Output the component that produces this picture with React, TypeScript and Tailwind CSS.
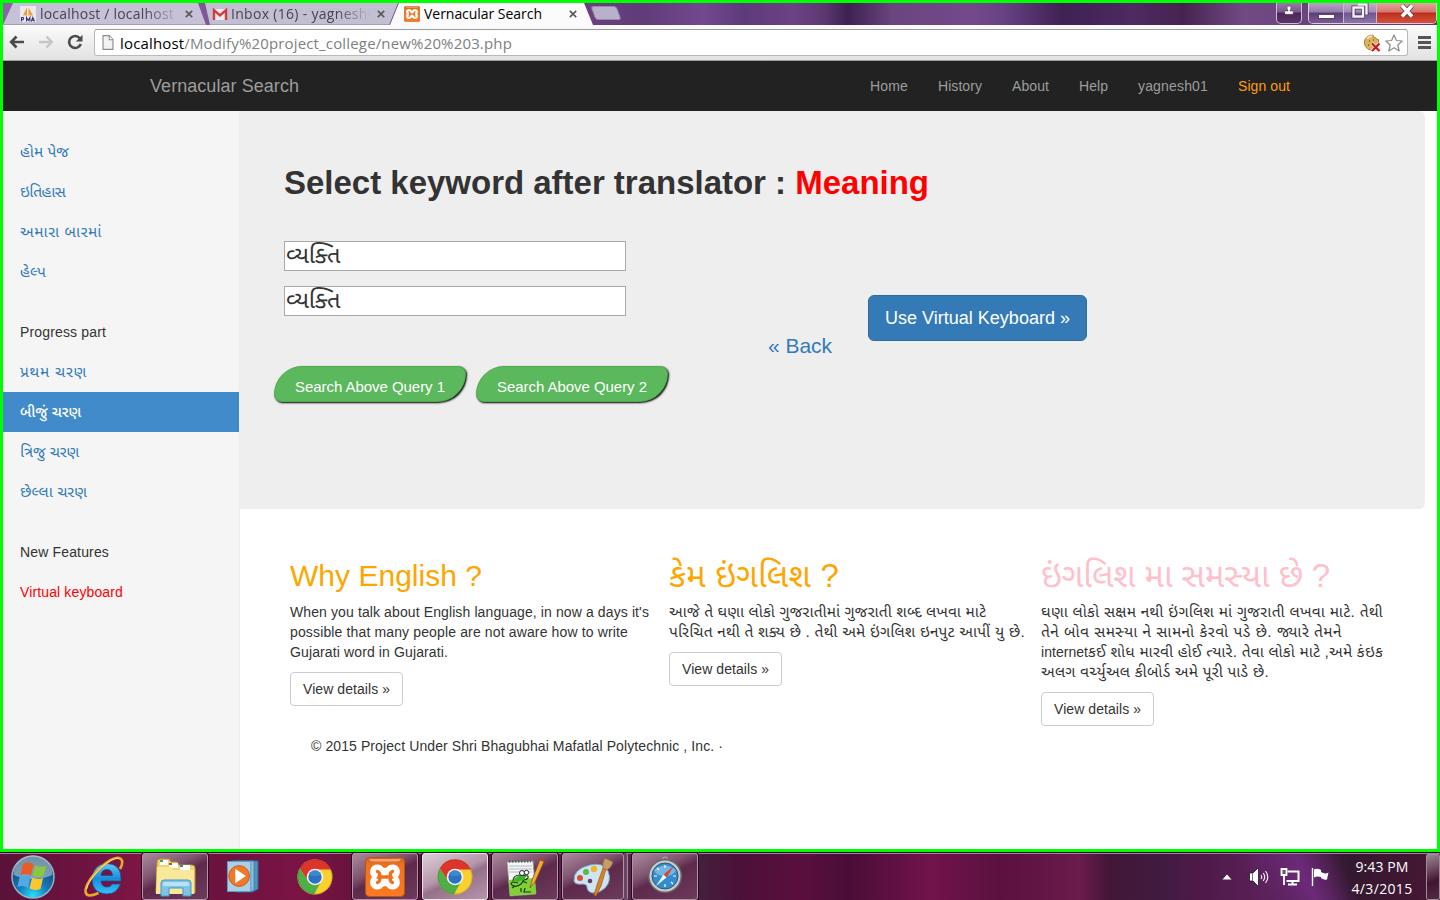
import { useLayoutEffect, useRef, type ReactNode } from "react";

/* A single line of text whose tracking is adjusted until it is `w` pixels wide. */
function Fit({ w, className = "", children }: { w: number; className?: string; children: ReactNode }) {
  const ref = useRef<HTMLSpanElement>(null);
  useLayoutEffect(() => {
    const el = ref.current;
    if (!el) return;
    el.style.letterSpacing = "0px";
    const natural = el.getBoundingClientRect().width;
    el.style.letterSpacing = "1px";
    const slope = el.getBoundingClientRect().width - natural;
    el.style.letterSpacing = slope > 0 ? `${(w - natural) / slope}px` : "0px";
  }, [w]);
  return (
    <span ref={ref} className={`inline-block whitespace-pre ${className}`}>
      {children}
    </span>
  );
}

function XamppIcon({ className }: { className: string }) {
  return (
    <svg viewBox="0 0 40 40" className={className}>
      <defs>
        <linearGradient id="xa" x1="0" y1="0" x2="0" y2="1">
          <stop offset="0" stopColor="#c9642a" />
          <stop offset="0.2" stopColor="#f0711c" />
          <stop offset="1" stopColor="#fb7a22" />
        </linearGradient>
      </defs>
      <rect x="0.5" y="0.5" width="39" height="39" rx="4" fill="url(#xa)" stroke="#b9540f" />
      <path d="M4 2h32q-1 2.500-4 2.500H8Q5 4.500 4 2z" fill="#f7b48a" opacity=".8" />
      <path
        d="M12.500 7.500c4.500 0 5 3.500 7.500 3.500s3-3.500 7.500-3.500c7 0 9.500 7.500 5.500 12.500 4 5 1.500 12.500-5.500 12.500-4.500 0-5-3.500-7.500-3.500s-3 3.500-7.500 3.500C5.500 32.500 3 25 7 20c-4-5-1.500-12.500 5.500-12.500z"
        fill="#fff"
      />
      <path d="M12.500 14.500q3.500 1.500 1.500 5.500h12q-2-4 1.500-5.500M12.500 25.500q3.500-1.500 1.500-5.500M27.500 25.500q-3.500-1.500-1.500-5.500" fill="none" stroke="#f0701c" strokeWidth="3.400" strokeLinecap="round" />
    </svg>
  );
}

function ChromeIcon() {
  return (
    <svg viewBox="0 0 36 36" className="h-9 w-9">
      <circle cx="18" cy="18" r="17.500" fill="#fcd02c" />
      <path d="M2.800 9.200A17.500 17.500 0 0 1 33.900 10.500H18L10.800 22z" fill="#dd342b" />
      <path d="M2.800 9.200 10.900 22 24 22.500 17 35.500A17.500 17.500 0 0 1 2.800 9.200z" fill="#4fae48" />
      <circle cx="18" cy="18" r="17" fill="none" stroke="#5b4a1e" strokeOpacity=".25" />
      <circle cx="18" cy="18" r="8.300" fill="#f6f6f2" />
      <circle cx="18" cy="18" r="6.700" fill="#2b73c2" />
      <path d="M12 15.500a6.400 6.400 0 0 1 12 0q-6 3-12 0z" fill="#5a9ada" opacity=".5" />
    </svg>
  );
}

function TabClose({ className = "" }: { className?: string }) {
  return (
    <svg viewBox="0 0 8 8" className={`h-2 w-2 shrink-0 ${className}`}>
      <path d="M.8.8l6.400 6.400M7.200.8.800 7.200" stroke="#5a5a5a" strokeWidth="1.700" />
    </svg>
  );
}

function TabStrip() {
  return (
    <div className="flex h-[22px] items-start bg-[linear-gradient(90deg,#8a64a4_0,#6b3f82_590px,#5f3c78_640px,#734890_700px,#5d3b7b_740px,#6c4285_790px,#5d3972_820px,#3e2150_845px,#6a4580_890px,#74498a_970px,#674284_1000px,#3f2153_1060px,#4d2a61_1130px,#46234f_1180px,#714a85_1240px,#66356a_1437px)] font-['Open_Sans',sans-serif] text-[14px] leading-5">
      <div className="flex h-[22px] w-[203px] items-center bg-[#c6c1d6] pl-[17px] shadow-[inset_0_-1px_0_#a49cb4] [clip-path:polygon(10px_0,195px_0,203px_22px,0_22px)]">
        <svg viewBox="0 0 16 16" className="mr-1 h-4 w-4 shrink-0">
          <rect width="16" height="16" fill="#ece9f0" />
          <path d="M3 9.500 7 1v8.500zM8.500 9.500V1.500L13 9.500z" fill="#f0a033" />
          <path d="M1.500 15.500v-4h1.500q1.300 1 0 2.200H1.500M6.500 15.500v-4l1.700 3 1.700-3v4M11.300 15.500l1.500-4 1.700 4M11.700 14.200h2.300" fill="none" stroke="#34346f" strokeWidth="1.100" />
        </svg>
        <div className="-mt-px w-[145px] shrink-0 overflow-hidden text-[#48434f] [mask-image:linear-gradient(90deg,#000_105px,transparent_140px)]">
          <Fit w={134}>localhost / localhost</Fit>
        </div>
        <TabClose />
      </div>
      <div className="-ml-[1px] flex h-[22px] w-[193px] items-center bg-[#c3bfd3] pl-[7px] shadow-[inset_0_-1px_0_#a49cb4] [clip-path:polygon(0_0,193px_0,184px_22px,5px_22px)]">
        <svg viewBox="0 0 16 16" className="mr-[3px] h-4 w-4 shrink-0">
          <rect x="1" y="3" width="14" height="11" fill="#edeaf2" />
          <path d="M2 14V4.200l6 5.300 6-5.300V14" fill="none" stroke="#cf3d3a" strokeWidth="2.400" />
        </svg>
        <div className="-mt-px w-[146px] shrink-0 overflow-hidden text-[#48434f] [mask-image:linear-gradient(90deg,#000_105px,transparent_140px)]">
          <Fit w={145}>Inbox (16) - yagnesh0</Fit>
        </div>
        <TabClose />
      </div>
      <div className="-ml-[8px] flex h-[22px] w-[203px] items-center bg-[#fbfbfc] pl-[13px] [clip-path:polygon(9px_0,194px_0,203px_22px,0_22px)]">
        <XamppIcon className="mr-1 ml-[1px] h-4 w-4 shrink-0" />
        <div className="-mt-px w-[146px] shrink-0 text-black">
          <Fit w={118}>Vernacular Search</Fit>
        </div>
        <TabClose className="-ml-px" />
      </div>
      <div className="mt-[3px] h-[14px] w-[26px] skew-x-[20deg] rounded-[3px] border border-[#9887a8] bg-[#b9b1cc]" />
      <div className="ml-auto flex h-[21px]">
        <div className="mr-[6px] flex w-[26px] items-center justify-center rounded-b-[5px] border-x border-b border-[#cdbcd7] bg-[linear-gradient(#9a7ba8_0,#79588a_45%,#4c2658_50%,#5b3469_100%)]">
          <svg viewBox="0 0 10 10" className="mb-1.5 h-[10px] w-[10px]">
            <path d="M3.200 1.200h3.600v3.600H6v1.300h3.200V9.200H.8V6.100H4V4.800h-.8z" fill="#fff" stroke="#33183f" strokeWidth=".4" />
          </svg>
        </div>
        <div className="flex w-[129px] overflow-hidden rounded-b-[5px] border-x border-b border-[#d9cbe0]">
          <div className="flex w-[35px] items-end justify-center border-r border-[#c8b9d2] bg-[linear-gradient(#b8a3c4_0,#967ba8_45%,#5b3d78_50%,#7b5b94_100%)] pb-[4px]">
            <div className="h-[5px] w-[17px] border border-[#544362] bg-white" />
          </div>
          <div className="flex w-[33px] items-center justify-center border-r border-[#c8b9d2] bg-[linear-gradient(#c1b0cc_0,#a28ab4_45%,#705394_50%,#8d75a8_100%)]">
            <svg viewBox="0 0 18 16" className="mb-1 h-4 w-[18px]">
              <path d="M6.500 1.500h9v10M2.500 4.500h9.500v9H2.500z" fill="none" stroke="#4b3b5c" strokeWidth="4" />
              <path d="M6.500 1.500h9v10M2.500 4.500h9.500v9H2.500z" fill="none" stroke="#f4f0f6" strokeWidth="2.400" />
            </svg>
          </div>
          <div className="flex flex-1 items-center justify-center bg-[linear-gradient(#e2a89f_0,#d6776c_45%,#bd2f1d_50%,#d6503c_100%)]">
            <svg viewBox="0 0 16 14" className="mb-1 h-[14px] w-4">
              <path d="M3 1.500 13 12.500M13 1.500 3 12.500" stroke="#584048" strokeWidth="5" />
              <path d="M3 1.500 13 12.500M13 1.500 3 12.500" stroke="#fff" strokeWidth="3.500" />
            </svg>
          </div>
        </div>
      </div>
    </div>
  );
}

function Toolbar() {
  return (
    <div className="flex h-9 items-start border-b border-[#a0a0a0] bg-[linear-gradient(#fbfbfb,#e2e2e2)] pt-[4px]">
      <svg viewBox="0 0 16 14" className="mt-[6px] ml-[6px] h-[14px] w-4">
        <path d="M7.500 1.500 2.200 7l5.300 5.500M2.500 7H15" fill="none" stroke="#4b4b4b" strokeWidth="2.700" />
      </svg>
      <svg viewBox="0 0 16 14" className="mt-[6px] ml-[13px] h-[14px] w-4">
        <path d="M8.500 1.500 13.800 7l-5.300 5.500M13.500 7H1" fill="none" stroke="#c6c6c6" strokeWidth="2.500" />
      </svg>
      <svg viewBox="0 0 16 16" className="mt-[5px] ml-[13px] h-4 w-4">
        <path d="M12.800 4.200A6 6 0 1 0 13.800 10" fill="none" stroke="#4b4b4b" strokeWidth="2.600" />
        <path d="M15.500.8V7.500H8.800z" fill="#4b4b4b" />
      </svg>
      <div className="ml-[11px] flex h-[27px] w-[1314px] items-center rounded-[3px] border border-[#b9b9b9] border-t-[#9c9c9c] bg-white font-['Open_Sans',sans-serif] text-[15px]">
        <svg viewBox="0 0 12 16" className="ml-[7px] h-[15px] w-3">
          <path d="M.7.700h6.800l3.800 4v10.600H.7z" fill="#f2f2f2" stroke="#8c8c8c" strokeWidth="1.200" />
          <path d="M7.300.800V5h4" fill="#fff" stroke="#8c8c8c" strokeWidth="1.100" />
        </svg>
        <div className="ml-[6px] leading-6 text-[#808080]">
          <Fit w={392}>
            <span className="text-black">localhost</span>/Modify%20project_college/new%20%203.php
          </Fit>
        </div>
        <svg viewBox="0 0 18 18" className="mr-1 ml-auto h-[18px] w-[18px]">
          <path d="M10 1.200a7.500 7.500 0 1 0 1 14.600L15.500 11V5.500q-2 .5-2.500-1.500-2.500 0-3-2.800z" fill="#dcb45f" stroke="#a3803a" />
          <path d="M4 4.500q3-3 5-2" stroke="#f6e3ae" strokeWidth="2" fill="none" />
          <path d="M6 7h1M10 6h1M5 11h1M9 10h1" stroke="#80581a" strokeWidth="1.300" />
          <path d="M9 9.500l7.500 7.500M16.500 9.500 9 17" stroke="#fff" strokeWidth="3.600" />
          <path d="M9 9.500l7.500 7.500M16.500 9.500 9 17" stroke="#d31313" strokeWidth="2.200" />
        </svg>
        <svg viewBox="0 0 18 18" className="mr-[4px] h-[18px] w-[18px]">
          <path d="M9 1 11.400 6.500l5.800.5-4.400 4 1.400 6L9 13.800 3.800 17l1.400-6L.8 7l5.800-.5z" fill="#fff" stroke="#8b8b8b" strokeWidth="1.200" strokeLinejoin="round" />
        </svg>
      </div>
      <svg viewBox="0 0 13 13" className="mt-[7px] ml-[10px] h-[13px] w-[13px]">
        <path d="M0 1.500h13M0 6.500h13M0 11.500h13" stroke="#555" strokeWidth="2.800" />
      </svg>
    </div>
  );
}

const navLinks: { label: string; w: number; color?: string }[] = [
  { label: "Home", w: 38 },
  { label: "History", w: 44 },
  { label: "About", w: 37 },
  { label: "Help", w: 29 },
  { label: "yagnesh01", w: 70 },
  { label: "Sign out", w: 52, color: "text-[#ff9d0a]" },
];

function Navbar() {
  return (
    <nav className="flex h-[50px] items-center bg-[#222] pr-[132px] pl-[147px] text-[#9d9d9d]">
      <Fit w={149} className="text-[18px] leading-5">
        Vernacular Search
      </Fit>
      <div className="ml-auto flex text-[14px]">
        {navLinks.map((l) => (
          <a key={l.label} className={`block px-[15px] leading-5 ${l.color ?? ""}`}>
            <Fit w={l.w}>{l.label}</Fit>
          </a>
        ))}
      </div>
    </nav>
  );
}

function SideItem({ w, className = "text-[15.500px] text-[#337ab7]", children }: { w: number; className?: string; children: string }) {
  return (
    <li className={`h-10 px-[17px] py-[10px] leading-5 ${className}`}>
      <Fit w={w} className="h-5">
        {children}
      </Fit>
    </li>
  );
}

function Sidebar() {
  return (
    <aside className="flex w-[237px] shrink-0 flex-col gap-5 border-r border-[#eee] bg-[#f5f5f5] pt-[21px]">
      <ul>
        <SideItem w={49}>હોમ પેજ</SideItem>
        <SideItem w={45}>ઇતિહાસ</SideItem>
        <SideItem w={82}>અમારા બારમાં</SideItem>
        <SideItem w={26}>હેલ્પ</SideItem>
      </ul>
      <ul>
        <SideItem w={86} className="text-[14px] text-[#333]">Progress part</SideItem>
        <SideItem w={67}>પ્રથમ ચરણ</SideItem>
        <SideItem w={61} className="bg-[#428bca] text-[15px] font-medium text-white">બીજું ચરણ</SideItem>
        <SideItem w={59}>ત્રિજુ ચરણ</SideItem>
        <SideItem w={67}>છેલ્લા ચરણ</SideItem>
      </ul>
      <ul>
        <SideItem w={89} className="text-[14px] text-[#333]">New Features</SideItem>
        <SideItem w={103} className="text-[14px] text-[#f00]">Virtual keyboard</SideItem>
      </ul>
    </aside>
  );
}

function QueryField() {
  return (
    <div className="h-[30px] w-[342px] border border-[#a9a9a9] bg-white pl-px text-[23.500px] leading-[26px] text-[#333]">
      <Fit w={54} className="h-[26px]">વ્યક્તિ</Fit>
    </div>
  );
}

function QueryButton({ children }: { children: string }) {
  return (
    <button className="h-9 w-[192px] rounded-tl-[30px] rounded-tr-[8px] rounded-br-[30px] rounded-bl-[8px] border border-[#4cae4c] bg-[#5cb85c] pt-[7px] text-[15px] text-white shadow-[1px_1px_2px_#000]">
      <Fit w={150}>{children}</Fit>
    </button>
  );
}

function Jumbotron() {
  return (
    <section className="h-[398px] w-[1185px] rounded-r-md bg-[#eee] pt-[52px]">
      <h1 className="ml-11 h-10 text-[33px] leading-10 font-bold text-[#333]">
        <Fit w={645}>
          Select keyword after translator : <span className="text-[#f00]">Meaning</span>
        </Fit>
      </h1>
      <div className="mt-[38px] flex">
        <div className="ml-[34px] flex w-[494px] flex-col">
          <div className="flex flex-col gap-[15px] pl-[10px]">
            <QueryField />
            <QueryField />
          </div>
          <div className="mt-[50px] flex gap-[10px]">
            <QueryButton>Search Above Query 1</QueryButton>
            <QueryButton>Search Above Query 2</QueryButton>
          </div>
        </div>
        <a className="mt-[90px] w-[100px] text-[21px] leading-[30px] text-[#337ab7]">
          <Fit w={64}>« Back</Fit>
        </a>
        <button className="mt-[54px] h-[46px] w-[219px] rounded-md border border-[#2e6da4] bg-[#337ab7] text-[18px] text-white">
          <Fit w={185}>Use Virtual Keyboard »</Fit>
        </button>
      </div>
    </section>
  );
}

type FeatureProps = {
  title: string;
  titleW: number;
  titleClass: string;
  bodyClass: string;
  lines: { lead?: string; text: string; w: number }[];
};

function Feature({ title, titleW, titleClass, bodyClass, lines }: FeatureProps) {
  return (
    <article>
      <h2 className={`h-[33px] leading-[33px] ${titleClass}`}>
        <Fit w={titleW} className="h-[33px]">{title}</Fit>
      </h2>
      <div className={`mt-[10px] text-[#333] ${bodyClass}`}>
        {lines.map(({ lead, text, w }) => (
          <p key={text} className="flex h-5 leading-5">
            {lead && <Fit w={47} className="h-5 text-[14px]">{lead}</Fit>}
            <Fit w={w} className="h-5">{text}</Fit>
          </p>
        ))}
      </div>
      <button className="mt-[10px] h-[34px] w-[113px] rounded border border-[#ccc] bg-white text-[14px] text-[#333]">
        <Fit w={87}>View details »</Fit>
      </button>
    </article>
  );
}

function Features() {
  return (
    <div className="mt-[50px] grid grid-cols-[379px_372px_380px] pl-[50px]">
      <Feature
        title="Why English ?"
        titleW={192}
        titleClass="text-[30px] text-[orange]"
        bodyClass="text-[14px]"
        lines={[
          { text: "When you talk about English language, in now a days it's", w: 359 },
          { text: "possible that many people are not aware how to write", w: 338 },
          { text: "Gujarati word in Gujarati.", w: 158 },
        ]}
      />
      <Feature
        title="કેમ ઇંગલિશ ?"
        titleW={170}
        titleClass="text-[33px] text-[orange]"
        bodyClass="text-[15.500px]"
        lines={[
          { text: "આજે તે ઘણા લોકો ગુજરાતીમાં ગુજરાતી શબ્દ લખવા માટે", w: 317 },
          { text: "પરિચિત નથી તે શક્ય છે . તેથી અમે ઇંગલિશ ઇનપુટ આપીં યુ છે.", w: 356 },
        ]}
      />
      <Feature
        title="ઇંગલિશ મા સમસ્યા છે ?"
        titleW={289}
        titleClass="text-[33px] text-[pink]"
        bodyClass="text-[15.500px]"
        lines={[
          { text: "ઘણા લોકો સક્ષમ નથી ઇંગલિશ માં ગુજરાતી લખવા માટે. તેથી", w: 342 },
          { text: "તેને બોવ સમસ્યા ને સામનો કેરવો પડે છે. જ્યારે તેમને", w: 301 },
          { lead: "internet", text: "કઈ શોધ મારવી હોઈ ત્યારે. તેવા લોકો માટે ,અમે કંઇક", w: 295 },
          { text: "અલગ વર્ચ્યુઅલ કીબોર્ડ અમે પૂરી પાડે છે.", w: 228 },
        ]}
      />
    </div>
  );
}

function TaskButton({ active = false, className = "", children }: { active?: boolean; className?: string; children: ReactNode }) {
  return (
    <div
      className={`flex h-[47px] items-center justify-center rounded-[3px] border shadow-[0_0_0_1px_#2a0a20] ${
        active
          ? "border-[#eee3ec] bg-[linear-gradient(155deg,#dccfd8_0,#b596aa_45%,#95708a_55%,#b795aa_100%)]"
          : "border-[#b591a8] bg-[linear-gradient(155deg,#a98a9f_0,#80546f_35%,#5e2a4c_50%,#6c3a5a_100%)]"
      } ${className}`}
    >
      {children}
    </div>
  );
}

function Taskbar() {
  return (
    <footer className="flex h-12 border-t border-[#28101f] bg-[linear-gradient(65deg,transparent_0_86%,#6b2a78_90%,transparent_93%),linear-gradient(90deg,#5a1238_0,#6d1340_80px,#7e1645_140px,#6c123f_220px,#7b1444_300px,#561138_400px,#5a2850_600px,#43203d_700px,#4c1038_740px,#5a0f3e_800px,#4a0d38_850px,#72134c_930px,#5a1140_1000px,#6b1b4c_1080px,#421637_1110px,#411b40_1160px,#4e1a48_1200px,#5a2058_1260px,#4a1c46_1310px,#331830_1350px,#481733_1440px)] shadow-[inset_0_1px_0_#a0869a]">
      <div className="flex w-[66px] items-center justify-center">
        <svg viewBox="0 0 44 44" className="h-11 w-11">
          <defs>
            <radialGradient id="orb" cx=".5" cy=".95" r=".9">
              <stop offset="0" stopColor="#28e0ff" />
              <stop offset=".4" stopColor="#1479b8" />
              <stop offset="1" stopColor="#123b66" />
            </radialGradient>
          </defs>
          <circle cx="22" cy="22" r="21" fill="url(#orb)" stroke="#8fb3c8" strokeWidth="1.500" />
          <path d="M2.500 20a19.500 19.500 0 0 1 39 0q-19 8-39 0z" fill="#b7c9d6" opacity=".6" />
          <path d="M12 9q5.500-3 10.500.5l-2.500 11q-5-3-10.700-.3z" fill="#ee5a26" />
          <path d="M24 10.300q5.500 2.700 11.300.2L32.500 21q-5.800 2.200-11-.3z" fill="#8cc63c" />
          <path d="M8.800 21.500q5.500-2.500 10.700.6L17 33q-5-3.400-10.700-.8z" fill="#56a8e4" />
          <path d="M21 22.500q5.300 2.600 11.100.4L29.500 34q-5.700 2.300-11-.4z" fill="#fdc62f" />
        </svg>
      </div>
      <div className="flex w-[76px] items-center justify-center">
        <svg viewBox="0 0 42 42" className="h-[42px] w-[42px]">
          <defs>
            <linearGradient id="ie" x1="0" y1="0" x2="0" y2="1">
              <stop offset="0" stopColor="#64c8f5" />
              <stop offset=".5" stopColor="#188bdb" />
              <stop offset="1" stopColor="#39c1f6" />
            </linearGradient>
          </defs>
          <path d="M38 25H18q.5 6 6 6 4 0 5-3h8.500Q34 38 23.500 38 9 37 9 23 10 8 24 7.500 39 8 38 25zM18 19.500h11.500q-.5-6-5.500-6-5.500 0-6 6z" fill="url(#ie)" stroke="#0b4f93" strokeWidth=".7" />
          <path d="M37 13q5-9-1-11Q30 .5 17 12 4 25 2.500 34q-.5 9 13 3" fill="none" stroke="#e5a72a" strokeWidth="2.600" />
          <path d="M36 2.500Q30 1 17 12.500 5 25 3.500 33" fill="none" stroke="#ffe487" strokeWidth="1" />
        </svg>
      </div>
      <TaskButton className="w-[66px]">
        <svg viewBox="0 0 42 42" className="h-[42px] w-[42px]">
          <path d="M3 6q0-3 3-3h9l2 3h6l2 3h13q3 0 3 3v25H2z" fill="#efd574" stroke="#b99337" />
          <path d="M6 4h8v5H6zM15 7h9v5h-9zM26 9h10v5H26z" fill="#fff" />
          <path d="M6 4h3v2H6z" fill="#31a84d" />
          <path d="M15 7h3v2h-3z" fill="#d8432e" />
          <path d="M26 9h3v2h-3z" fill="#2d82c8" />
          <path d="M3 11h14l2 3h21v24H2z" fill="#f8e89a" />
          <path d="M7 40V27q0-3 3-3h24q3 0 3 3v13h-8v-8H15v8z" fill="#7cc5e8" stroke="#4a97c4" />
          <path d="M9 28q0-2 2-2h22q2 0 2 2v2H9z" fill="#b8e3f5" />
        </svg>
      </TaskButton>
      <div className="flex w-[69px] items-center justify-center">
        <svg viewBox="0 0 34 34" className="h-[33px] w-[33px]">
          <path d="M10 1h23v29l-6 3H10z" fill="#4d95c2" stroke="#30698f" />
          <path d="M6 1h23v31H6z" fill="#86bfe0" stroke="#41799f" />
          <path d="M1.500 1.500h24v31h-24z" fill="#a9d0e5" stroke="#5f9abf" />
          <circle cx="13.500" cy="16.500" r="10.700" fill="#f0782a" stroke="#d15a12" />
          <path d="M9.500 9 20.500 16.500l-11 7.500z" fill="#fff" />
        </svg>
      </div>
      <div className="flex w-[75px] items-center justify-center">
        <ChromeIcon />
      </div>
      <TaskButton className="w-[66px]">
        <XamppIcon className="h-10 w-10" />
      </TaskButton>
      <TaskButton active className="ml-1 w-[66px]">
        <ChromeIcon />
      </TaskButton>
      <TaskButton className="ml-1 w-[66px]">
        <svg viewBox="0 0 40 40" className="h-10 w-10">
          <path d="M2 5 28 4l3 33-26 2z" fill="#f5f6f2" stroke="#8a8a8a" strokeWidth=".8" />
          <path d="M4 9h23M4 12h23M4 15h23" stroke="#98adc4" strokeWidth=".8" />
          <path d="m3.500 23 26-2 1.500 16-26 1.500z" fill="#80d234" />
          <path d="M4 4.500h22" stroke="#555" strokeWidth="2" strokeDasharray="1.500 1.500" />
          <path d="M8 24q0-6 7-6l8 1q1 3-4 4l-3 4q-5 4-9 1-2-2 1-3l5 1M17 24l5 2M10 29l-3 2M16 31v4M20 31l-1 4h7" fill="none" stroke="#183918" strokeWidth="1.200" />
          <path d="M8 24q3-7 13-5l-1 3-7 3z" fill="#3bb22b" />
          <circle cx="17" cy="16" r="2.500" fill="#fff" stroke="#222" />
          <circle cx="21.500" cy="15.500" r="2.200" fill="#fff" stroke="#222" />
          <path d="m25 31 2-8L35 3l4 1.500L30 25z" fill="#f2ad32" stroke="#875b18" strokeWidth=".8" />
          <path d="m35 3 1-2.500 4 1.500-1 2.500z" fill="#b23b3b" />
        </svg>
      </TaskButton>
      <TaskButton className="ml-1 w-[62px]">
        <svg viewBox="0 0 40 40" className="h-10 w-10">
          <path d="M17 8q14-3 18 6 4 10-3 17-5 5-12 5-6-1-6-6 0-3-4-3-8 1-9-3Q0 12 17 8z" fill="#cfe4f3" stroke="#7ea7c6" />
          <circle cx="7" cy="21" r="3" fill="#e04b35" />
          <circle cx="13" cy="15" r="3" fill="#57b947" />
          <circle cx="21" cy="12" r="3.200" fill="#f3b62a" />
          <circle cx="17" cy="24" r="2.300" fill="#5f3f63" />
          <path d="m21 38 3-10 6-17 3 1-5 17-5 10z" fill="#d88428" stroke="#9a5613" strokeWidth=".7" />
          <path d="M30 11q-1-6 2-10l8 4q-1 5-6 8z" fill="#c59d66" stroke="#8c6738" strokeWidth=".7" />
        </svg>
      </TaskButton>
      <div className="h-[47px] w-1 rounded-r-[3px] border-r border-[#a88a9e] bg-[#684660]" />
      <TaskButton className="ml-1 w-[66px]">
        <svg viewBox="0 0 36 38" className="-mt-1 h-[38px] w-9">
          <circle cx="18" cy="20" r="17" fill="#656a6d" />
          <circle cx="18" cy="20" r="15.500" fill="#c9ccce" />
          <circle cx="18" cy="20" r="13" fill="#308ed0" stroke="#36566b" />
          <path d="M7 14q11-9 22 0-2 6-11 6T7 14z" fill="#9dd0ee" opacity=".6" />
          <path d="M18 9v3M18 28v3M7 20h3M26 20h3M10 12l2 2M26 28l-2-2" stroke="#fff" strokeWidth="1.200" />
          <path d="M27 10 19.500 21.500l-3-3z" fill="#e2412d" />
          <path d="m9 30 7.500-11.500 3 3z" fill="#f4f4f4" />
          <path d="M15.500 3q0-2 2.500-2t2.500 2" fill="none" stroke="#b0b0b0" />
        </svg>
      </TaskButton>
      <div className="ml-auto flex items-center font-['Open_Sans',sans-serif] text-[14px] text-white">
        <svg viewBox="0 0 10 6" className="mr-[17px] h-[6px] w-[10px]">
          <path d="M5 .5 9.500 5.500h-9z" fill="#fff" />
        </svg>
        <svg viewBox="0 0 20 20" className="mr-[11px] h-5 w-5">
          <path d="M.5 6h3.500L9.500.5v19L4 14H.5z" fill="#fff" stroke="#28122c" strokeWidth=".8" />
          <path d="M3.500 6v8" stroke="#777" />
          <path d="M12 8q1.500 2 0 4M14.200 6q3 4 0 8M16.500 4q4.500 6 0 12" fill="none" stroke="#eee" strokeWidth="1.200" />
        </svg>
        <svg viewBox="0 0 20 20" className="mr-[11px] h-5 w-5">
          <path d="M7.500 4.500H18.500v9.500H6.500M12.500 14v3M8 17.500h9" fill="none" stroke="#fff" strokeWidth="2" />
          <path d="M1.500 2h5v6h-5zM4 8v10" fill="#685572" stroke="#fff" strokeWidth="1.800" />
        </svg>
        <svg viewBox="0 0 18 18" className="mr-[22px] h-[18px] w-[18px]">
          <path d="M1.500 0v18" stroke="#fff" strokeWidth="1.400" />
          <path d="M3 1.500q3.500-1.500 7 .5v2q4 2.500 7.500.5l-1.500 7q-3 1-6-1.500v-1q-4-1-7 .5z" fill="#fff" />
        </svg>
        <div className="mt-[2px] mr-[13px] flex w-[62px] flex-col items-center leading-[22px]">
          <Fit w={53}>9:43 PM</Fit>
          <Fit w={61}>4/3/2015</Fit>
        </div>
        <div className="h-[46px] w-[14px] rounded-[2px] border border-[#a18b9a] bg-[linear-gradient(160deg,#9a8792_0,#6b4559_35%,#40162f_60%,#552a42_100%)]" />
      </div>
    </footer>
  );
}

export default function App() {
  return (
    <div className="flex h-[900px] w-[1440px] flex-col overflow-hidden bg-white font-['Liberation_Sans','Noto_Sans_Gujarati',sans-serif]">
      <div className="flex h-[852px] flex-col border-[3px] border-[#00ff00]">
        <TabStrip />
        <Toolbar />
        <Navbar />
        <div className="flex min-h-0 flex-1">
          <Sidebar />
          <main className="flex-1">
            <Jumbotron />
            <Features />
            <p className="ml-[71px] pt-[10px] text-[14px] leading-5 text-[#333]">
              <Fit w={412}>© 2015 Project Under Shri Bhagubhai Mafatlal Polytechnic , Inc. ·</Fit>
            </p>
          </main>
        </div>
      </div>
      <Taskbar />
    </div>
  );
}
